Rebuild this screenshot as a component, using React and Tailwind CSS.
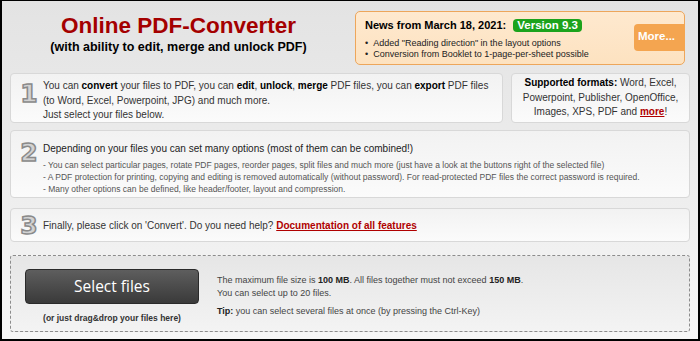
import React from 'react';

const font = { fontFamily: '"Liberation Sans", Arial, sans-serif' };

// Outlined step number
const StepNum = ({ n }) => (
  <div className="w-[16px] shrink-0 flex justify-center text-[25px] font-bold leading-none text-[#d2d2d2] [-webkit-text-stroke:1.5px_#8a8a8a] [font-family:'DejaVu_Sans',sans-serif]">
    {n}
  </div>
);

const Box = ({ className = '', children }) => (
  <div className={`rounded-[4px] border border-[#d8d8d8] bg-gradient-to-b from-[#f2f2f2] to-[#fbfbfb] ${className}`}>
    {children}
  </div>
);

export default function App() {
  return (
    <div
      className="w-[700px] h-[341px] overflow-hidden border-t border-l-2 border-r-2 border-b-2 border-black bg-gradient-to-b from-[#e3e3e3] to-[#f6f6f6] text-[#333]"
      style={font}
    >
      {/* header */}
      <div className="flex h-[70px] pt-[10px]">
        <div className="w-[353px] flex flex-col items-center pt-[2px]">
          <h1 className="text-[22.5px] font-bold leading-[25px] text-[#a40000]">Online PDF-Converter</h1>
          <p className="text-[12.5px] font-bold text-black leading-[16px] mt-[1px]">(with ability to edit, merge and unlock PDF)</p>
        </div>
        <div className="w-[330px] h-[54px] rounded-[5px] border border-[#eda65b] bg-gradient-to-b from-[#fee9cf] to-[#fde2c0] flex">
          <div className="flex-1 pl-[9px] pt-[5px]">
            <div className="flex items-center">
              <span className="text-[11px] font-bold text-black">News from March 18, 2021:</span>
              <span className="ml-[7px] rounded-[4px] bg-[#1ca31c] px-[4px] text-[11.5px] font-bold leading-[13px] text-white">Version 9.3</span>
            </div>
            <ul className="mt-[4px] text-[9px] leading-[11.5px] text-[#222]">
              <li className="flex gap-[5px]"><span>•</span>Added "Reading direction" in the layout options</li>
              <li className="flex gap-[5px]"><span>•</span>Conversion from Booklet to 1-page-per-sheet possible</li>
            </ul>
          </div>
          <div className="self-center mt-[-2px] mr-[-1px] w-[51px] h-[27px] rounded-l-[4px] bg-[#f4a550] flex items-center pl-[4px] text-[11.5px] font-bold text-white">
            More...
          </div>
        </div>
      </div>

      <div className="px-[8px] flex flex-col">
        {/* step 1 */}
        <div className="flex gap-[8px] mt-[2px]">
          <Box className="w-[493px] h-[50px] flex pl-[10px] pt-[7px]">
            <StepNum n="1" />
            <div className="ml-[6px] mt-[-2px] text-[10px] leading-[14.5px] text-[#333]">
              You can <b className="text-black">convert</b> your files to PDF, you can <b className="text-black">edit</b>, <b className="text-black">unlock</b>, <b className="text-black">merge</b> PDF files, you can <b className="text-black">export</b> PDF files
              <br />(to Word, Excel, Powerpoint, JPG) and much more.
              <br />Just select your files below.
            </div>
          </Box>
          <Box className="flex-1 h-[50px] flex items-center justify-center text-center text-[10px] leading-[14.5px]">
            <div>
              <b className="text-black">Supported formats:</b> Word, Excel,
              <br />Powerpoint, Publisher, OpenOffice,
              <br />Images, XPS, PDF and <a className="font-bold text-[#b00000] underline">more</a>!
            </div>
          </Box>
        </div>

        {/* step 2 */}
        <Box className="mt-[7px] h-[68px] flex pl-[10px] pt-[9px]">
          <StepNum n="2" />
          <div className="ml-[6px]">
            <div className="text-[10px] leading-[16px] text-[#222] mt-[1px]">
              Depending on your files you can set many options (most of them can be combined!)
            </div>
            <div className="mt-[2px] text-[8.5px] leading-[12px] text-[#555]">
              - You can select particular pages, rotate PDF pages, reorder pages, split files and much more (just have a look at the buttons right of the selected file)
              <br />- A PDF protection for printing, copying and editing is removed automatically (without password). For read-protected PDF files the correct password is required.
              <br />- Many other options can be defined, like header/footer, layout and compression.
            </div>
          </div>
        </Box>

        {/* step 3 */}
        <Box className="mt-[10px] h-[34px] flex items-center pl-[10px]">
          <StepNum n="3" />
          <div className="ml-[6px] text-[10px] text-[#333]">
            Finally, please click on 'Convert'. Do you need help?{' '}
            <a className="font-bold text-[#b00000] underline">Documentation of all features</a>
          </div>
        </Box>

        {/* upload zone */}
        <div className="mt-[13px] h-[77px] rounded-[3px] border border-dashed border-[#8c8c8c] bg-gradient-to-b from-[#e6e6e6] to-[#f3f3f3] flex pl-[14px] pt-[13px]">
          <div className="flex flex-col items-center w-[174px]">
            <div className="w-[174px] h-[35px] rounded-[4px] border border-[#2a2a2a] bg-gradient-to-b from-[#5e5e5e] to-[#3a3a3a] flex items-center justify-center text-[15.5px] text-white [font-family:'Open_Sans',sans-serif]">
              Select files
            </div>
            <div className="mt-[8px] text-[8.5px] font-bold text-[#333]">(or just drag&amp;drop your files here)</div>
          </div>
          <div className="ml-[18px] pt-[5px] text-[9px] leading-[13px] text-[#444]">
            The maximum file size is <b className="text-[#222]">100 MB</b>. All files together must not exceed <b className="text-[#222]">150 MB</b>.
            <br />You can select up to 20 files.
            <div className="mt-[5px]"><b className="text-[#222]">Tip:</b> you can select several files at once (by pressing the Ctrl-Key)</div>
          </div>
        </div>
      </div>
    </div>
  );
}
